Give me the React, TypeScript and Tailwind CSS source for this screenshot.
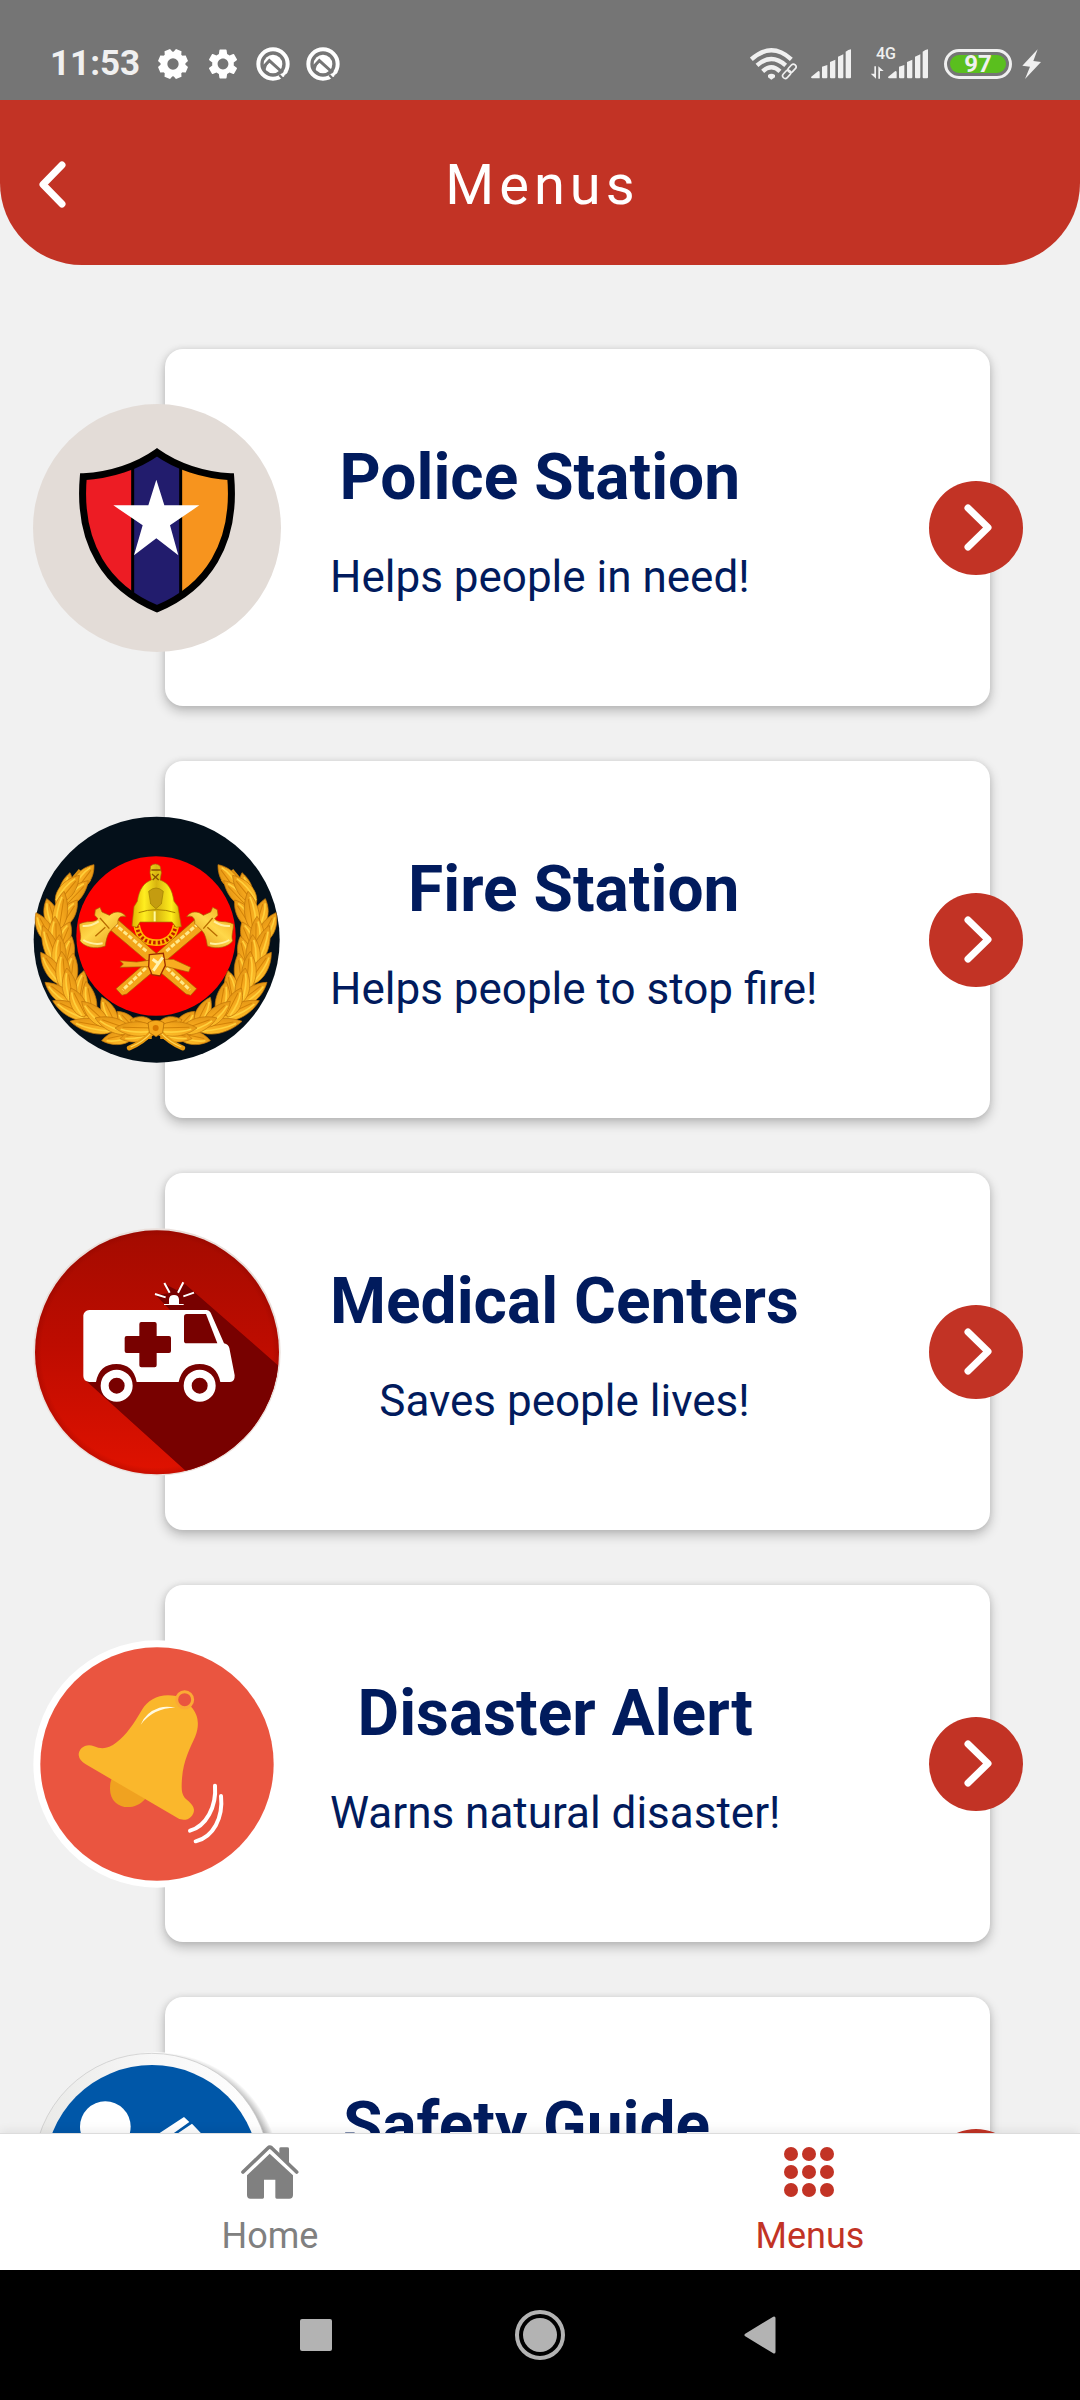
import type { ReactNode } from "react";
import { MdSettings } from "react-icons/md";

/* ---------- Status bar icons ---------- */

function CogIcon() {
  const teeth = [22.5, 67.5, 112.5, 157.5, 202.5, 247.5, 292.5, 337.5];
  return (
    <svg className="h-[30px] w-[30px]" viewBox="-45 -45 90 90" aria-hidden="true">
      <g fill="#fff">
        {teeth.map((a) => (
          <path key={a} d="M-14 -30 L-9 -45 H9 L14 -30Z" transform={`rotate(${a})`} />
        ))}
      </g>
      <circle r="27" fill="none" stroke="#fff" strokeWidth="20" />
    </svg>
  );
}

function CompassIcon() {
  return (
    <svg className="h-[34px] w-[34px]" viewBox="0 0 102 102" aria-hidden="true">
      <circle cx="51" cy="51" r="44" fill="none" stroke="#fff" strokeWidth="12" />
      <circle cx="51" cy="51" r="28" fill="#fff" />
      <path d="M20 62 L40 41 L88 84" fill="none" stroke="#757575" strokeWidth="9" />
      <path d="M20 58 L36 44 L28 70Z" fill="#757575" />
      <path d="M76 88 L92 72" fill="none" stroke="#fff" strokeWidth="9" />
      <path d="M70 84 L84 99" fill="none" stroke="#757575" strokeWidth="7" />
    </svg>
  );
}

function WifiIcon() {
  return (
    <svg className="h-[32px] w-[47px]" viewBox="26 38 141 96" aria-hidden="true">
      <g fill="none" stroke="#f0f0f0" strokeWidth="13">
        <path d="M30 72 Q90 18 150 72" />
        <path d="M47 90 Q90 52 133 90" />
        <path d="M64 108 Q90 84 116 108" />
      </g>
      <path d="M80 119 Q90 112 101 119 V126 L90 133 L80 126Z" fill="#f0f0f0" />
      <g fill="none" stroke="#757575" strokeWidth="11">
        <rect x="-17" y="-8" width="34" height="16" rx="8" transform="translate(135 117) rotate(-47)" />
        <rect x="-17" y="-8" width="34" height="16" rx="8" transform="translate(153 98) rotate(-47)" />
      </g>
      <g fill="none" stroke="#f0f0f0" strokeWidth="5">
        <rect x="-14" y="-8" width="28" height="16" rx="8" transform="translate(136 117) rotate(-47)" />
        <rect x="-14" y="-8" width="28" height="16" rx="8" transform="translate(152 99) rotate(-47)" />
      </g>
    </svg>
  );
}

const BARS =
  "M210 122 L232 104 Q236 104 236 108 V126 H214 Q210 126 210 122Z M243 91 L259 86 V123 Q259 126 256 126 H246 Q243 126 243 123Z M267 77 L283 70 V123 Q283 126 280 126 H270 Q267 126 267 123Z M291 61 L307 54 V123 Q307 126 304 126 H294 Q291 126 291 123Z M314 46 Q322 40 330 39 V123 Q330 126 327 126 H317 Q314 126 314 123Z";

function SignalIcon() {
  return (
    <svg className="h-[30px] w-[40px]" viewBox="210 38 120 90" aria-hidden="true">
      <path d={BARS} fill="#f0f0f0" />
    </svg>
  );
}

function MobileDataIcon() {
  return (
    <div className="relative h-[30px] w-[57px]">
      <span className="absolute -top-[4px] left-[5px] text-[16px] leading-[18px] font-medium">4G</span>
      <svg className="h-[30px] w-[57px]" viewBox="159 38 171 90" aria-hidden="true">
        <path d={BARS} fill="#f0f0f0" />
        <path d="M169 90 h5 V127 L158 112 H169Z M181 127 h5 V104 H197 L181 90Z" fill="#f0f0f0" />
      </svg>
    </div>
  );
}

/* ---------- Menu badges ---------- */

function PoliceBadge() {
  return (
    <svg viewBox="39 188 744 744" className="size-full" aria-hidden="true">
      <defs>
        <clipPath id="shield">
          <path d="M411 333 C470 375 550 402 632 406 C650 610 560 740 411 802 C262 740 172 610 190 406 C272 402 352 375 411 333Z" />
        </clipPath>
      </defs>
      <circle cx="411" cy="560" r="372" fill="#e3dcd7" />
      <g clipPath="url(#shield)">
        <rect x="170" y="320" width="168" height="500" fill="#ed1c24" />
        <rect x="338" y="320" width="144" height="500" fill="#221c6d" />
        <rect x="482" y="320" width="170" height="500" fill="#f7941e" />
        <path d="M338 320 V820 M482 320 V820" stroke="#000" strokeWidth="9" />
      </g>
      <path
        d="M411 333 C470 375 550 402 632 406 C650 610 560 740 411 802 C262 740 172 610 190 406 C272 402 352 375 411 333Z"
        fill="none"
        stroke="#000"
        strokeWidth="21"
      />
      <path
        d="M409 415 L433 492 H538 L450 552 L475 642 L409 591 L342 642 L368 552 L280 492 H385Z"
        fill="#fff"
      />
    </svg>
  );
}

/* Each leaf runs from its base on the stem to its tip. */
const LEAVES: [number, number, number, number][] = [
  [165, 262, 222, 190],
  [130, 310, 150, 214],
  [128, 315, 205, 238],
  [112, 300, 178, 222],
  [105, 380, 80, 292],
  [118, 375, 172, 296],
  [112, 385, 132, 270],
  [92, 420, 48, 334],
  [115, 440, 150, 362],
  [104, 450, 105, 345],
  [112, 490, 68, 372],
  [130, 500, 155, 405],
  [116, 505, 118, 400],
  [125, 545, 62, 453],
  [145, 560, 160, 455],
  [132, 560, 125, 450],
  [160, 610, 75, 543],
  [172, 600, 192, 508],
  [155, 600, 140, 500],
  [205, 650, 98, 598],
  [215, 645, 198, 540],
  [190, 640, 152, 560],
  [275, 685, 150, 660],
  [285, 675, 245, 588],
  [260, 672, 185, 600],
  [340, 700, 245, 718],
  [345, 690, 292, 630],
  [330, 690, 225, 650],
  [400, 690, 300, 712],
  [400, 678, 330, 655],
  [400, 685, 285, 680],
];

function Leaf({ leaf }: { leaf: [number, number, number, number] }) {
  const [bx, by, tx, ty] = leaf;
  const len = Math.hypot(tx - bx, ty - by);
  const angle = (Math.atan2(ty - by, tx - bx) * 180) / Math.PI;
  const w = 23;
  return (
    <g transform={`translate(${bx} ${by}) rotate(${angle})`}>
      <path
        d={`M-8 0 C${len * 0.15} ${-w * 1.3} ${len * 0.65} ${-w * 1.2} ${len} 0 C${len * 0.65} ${w * 1.2} ${len * 0.15} ${w * 1.3} -8 0Z`}
        fill="url(#gold)"
        stroke="#c07408"
        strokeWidth="2"
      />
      <path d={`M0 -5 Q${len * 0.5} -14 ${len * 0.85} -3`} fill="none" stroke="#ffd03c" strokeWidth="5" />
      <path d={`M0 5 L${len * 0.8} 3`} fill="none" stroke="#d28208" strokeWidth="3" />
    </g>
  );
}

function WreathHalf() {
  return (
    <g>
      <path
        d="M395 688 C260 690 110 610 112 420 C112 340 150 270 195 220"
        fill="none"
        stroke="#dc9010"
        strokeWidth="50"
      />
      {LEAVES.map((leaf) => (
        <Leaf key={leaf.join("-")} leaf={leaf} />
      ))}
      <path d="M398 690 Q370 722 328 740" fill="none" stroke="#e89a10" strokeWidth="15" strokeLinecap="round" />
      <path d="M392 696 Q368 722 332 737" fill="none" stroke="#ffd653" strokeWidth="4" />
    </g>
  );
}

function Axe() {
  return (
    <g>
      <path d="M268 362 L290 352 L530 562 L512 582 L498 578 L270 385Z" fill="#f3a51a" stroke="#a85c00" strokeWidth="2" />
      <path d="M282 366 L380 450 M440 500 L510 566" stroke="#ffe889" strokeWidth="9" strokeDasharray="14 5" />
      <path
        d="M226 325 L240 318 L246 332 L268 342 C284 328 306 328 318 346 C300 340 292 352 294 366 L272 388 C262 398 258 418 256 434 C226 446 190 436 180 418 C186 404 176 382 178 368 C200 356 222 366 234 352 L224 342Z"
        fill="url(#blade)"
        stroke="#a85c00"
        strokeWidth="2"
      />
      <path d="M188 374 Q212 376 236 360 M190 416 Q218 432 248 426" fill="none" stroke="#fff0a0" strokeWidth="6" />
      <path d="M240 350 L268 382 M226 405 L256 378" stroke="#b86c00" strokeWidth="4" />
    </g>
  );
}

function FireBadge() {
  return (
    <svg viewBox="39 44 744 744" className="size-full" aria-hidden="true">
      <defs>
        <linearGradient id="gold" x1="0" y1="0" x2="1" y2="1">
          <stop offset="0" stopColor="#ffc62e" />
          <stop offset="0.55" stopColor="#f4a61c" />
          <stop offset="1" stopColor="#d98c10" />
        </linearGradient>
        <linearGradient id="blade" x1="0" y1="0" x2="1" y2="1">
          <stop offset="0" stopColor="#f0a010" />
          <stop offset="0.45" stopColor="#ffd84a" />
          <stop offset="1" stopColor="#e08c0c" />
        </linearGradient>
        <linearGradient id="helmet" x1="0" y1="0" x2="1" y2="0">
          <stop offset="0" stopColor="#e0b400" />
          <stop offset="0.25" stopColor="#ffee20" />
          <stop offset="0.5" stopColor="#d8b410" />
          <stop offset="0.8" stopColor="#fff01c" />
          <stop offset="1" stopColor="#d0a400" />
        </linearGradient>
      </defs>
      <circle cx="410" cy="415" r="369" fill="#04101a" />
      <circle cx="408" cy="404" r="239" fill="#fe0000" />
      <WreathHalf />
      <g transform="translate(816 0) scale(-1 1)">
        <WreathHalf />
      </g>
      <path d="M384 664 Q408 650 432 664 L428 694 L408 706 L388 694Z" fill="#f5a81c" stroke="#a86000" strokeWidth="2" />
      <circle cx="407" cy="680" r="9" fill="#d87800" />
      <path d="M350 372 Q358 424 408 424 Q458 424 468 372" fill="none" stroke="#ffb400" strokeWidth="20" />
      <path
        d="M350 372 Q358 424 408 424 Q458 424 468 372"
        fill="none"
        stroke="#c01800"
        strokeWidth="11"
        strokeDasharray="7 6"
      />
      <Axe />
      <g transform="translate(818 0) scale(-1 1)">
        <Axe />
      </g>
      <path d="M300 478 L350 482 L408 474 L460 474 L512 498 L506 512 L440 496 L380 496 L300 498 L310 488Z" fill="#f8ac20" stroke="#a85c00" strokeWidth="2" />
      <path d="M388 460 L430 456 L436 492 L420 524 L396 520 L386 496Z" fill="#ffb82a" stroke="#9c2c00" strokeWidth="4" />
      <path d="M400 508 L428 468 M398 474 L412 484" stroke="#fff2b0" strokeWidth="9" />
      <path
        d="M392 194 Q406 182 420 194 L424 214 L420 236 C444 244 456 262 462 300 L474 316 L484 376 L468 378 L456 362 H360 L350 378 L336 374 L342 316 L352 300 C358 262 372 244 394 236 L390 214Z"
        fill="url(#helmet)"
        stroke="#a87400"
        strokeWidth="2"
      />
      <path d="M394 206 H422 M396 218 L416 236 M416 218 L398 236" stroke="#8a5200" strokeWidth="4" />
      <path d="M386 270 Q408 250 430 270 L424 308 L408 322 L392 308Z" fill="#c49c10" stroke="#9c7c00" strokeWidth="2" />
      <path d="M356 334 Q408 316 466 334" fill="none" stroke="#a88000" strokeWidth="3" />
      <path d="M404 330 V360" stroke="#fff9a0" strokeWidth="6" />
    </svg>
  );
}

function MedicalBadge() {
  return (
    <svg viewBox="39 54 744 744" className="size-full" aria-hidden="true">
      <defs>
        <linearGradient id="medical" x1="0" y1="0" x2="0" y2="1">
          <stop offset="0" stopColor="#a30b00" />
          <stop offset="0.5" stopColor="#bf0c00" />
          <stop offset="1" stopColor="#e01200" />
        </linearGradient>
        <radialGradient id="medicalRim" cx="0.5" cy="0.5" r="0.5">
          <stop offset="0.93" stopColor="#700" stopOpacity="0" />
          <stop offset="1" stopColor="#700" stopOpacity="0.3" />
        </radialGradient>
        <clipPath id="medicalClip">
          <circle cx="411" cy="427" r="366" />
        </clipPath>
      </defs>
      <circle cx="411" cy="426" r="371" fill="#eadfdb" />
      <g clipPath="url(#medicalClip)">
        <rect x="39" y="54" width="744" height="744" fill="url(#medical)" />
        <path d="M198 512 L500 785 L820 785 V506 L495 222 L470 240 L434 222 L445 250 L408 256 L450 300Z" fill="#780100" />
        <rect x="39" y="54" width="744" height="744" fill="url(#medicalRim)" />
      </g>
      <path
        d="M208 300 H560 Q568 300 572 308 L612 400 Q626 404 628 414 L644 496 Q645 516 630 516 H601 Q590 462 539 462 Q488 462 476 516 H350 Q340 462 289 462 Q238 462 228 516 H208 Q190 514 190 498 V316 Q192 302 208 300Z"
        fill="#fff"
      />
      <path d="M500 312 H558 L592 400 H500 Q492 400 492 392 V320 Q492 312 500 312Z" fill="#780100" />
      <path
        d="M364 336 H404 Q410 336 410 342 V378 H447 Q453 378 453 384 V423 Q453 429 447 429 H410 V466 Q410 472 404 472 H364 Q358 472 358 466 V429 H320 Q314 429 314 423 V384 Q314 378 320 378 H358 V342 Q358 336 364 336Z"
        fill="#780100"
      />
      <g fill="#780100" stroke="#fff" strokeWidth="24">
        <circle cx="290" cy="527" r="36" />
        <circle cx="539" cy="527" r="36" />
      </g>
      <path d="M432 282 H447 V268 Q448 255 462 255 Q476 255 477 268 V282 H491 V285 H432Z" fill="#fff" />
      <path d="M433 219 L449 248 M490 217 L474 248 M405 252 L437 262 M522 248 L490 259" stroke="#fff" strokeWidth="6" />
    </svg>
  );
}

function DisasterBadge() {
  return (
    <svg viewBox="39 59 744 744" className="size-full" aria-hidden="true">
      <circle cx="411" cy="431" r="371" fill="#fff" />
      <circle cx="411" cy="431" r="350" fill="#ea5540" />
      <path d="M276 474 L376 535 C340 578 270 565 270 505 Q270 485 276 474Z" fill="#f0a220" />
      <path
        d="M468 227 C420 218 386 236 366 268 C340 312 320 342 290 366 C265 386 245 388 222 378 C198 368 176 384 176 404 Q178 420 196 431 L474 594 C496 606 522 592 522 568 C520 552 504 542 494 532 C484 520 484 504 486 474 C490 420 512 380 526 348 C540 312 534 282 514 260Z"
        fill="#fab72c"
      />
      <circle cx="494" cy="238" r="24" fill="#ea5540" stroke="#fbaa35" strokeWidth="9" />
      <path d="M362 313 Q400 262 466 262 Q440 256 418 262 Q376 276 362 313Z" fill="#fff9df" />
      <g fill="none" stroke="#fff" strokeWidth="12" strokeLinecap="round">
        <path d="M585 496 C590 560 558 618 510 631" />
        <path d="M603 527 C610 592 580 650 527 663" />
      </g>
    </svg>
  );
}

function SafetyBadge() {
  return (
    <svg viewBox="9 38 744 744" className="size-full" aria-hidden="true">
      <defs>
        <linearGradient id="rim" x1="0" y1="0" x2="1" y2="0">
          <stop offset="0" stopColor="#e9e9e7" />
          <stop offset="0.5" stopColor="#f7f7f7" />
          <stop offset="1" stopColor="#fff" />
        </linearGradient>
        <radialGradient id="rimShade" cx="0.5" cy="0.5" r="0.5">
          <stop offset="0.93" stopColor="#b4b4b4" />
          <stop offset="1" stopColor="#fff" />
        </radialGradient>
      </defs>
      <circle cx="381" cy="410" r="371" fill="url(#rimShade)" />
      <circle cx="365" cy="396" r="354" fill="url(#rim)" stroke="#c4c4c4" strokeWidth="2" />
      <circle cx="366" cy="398" r="321" fill="#0057a8" />
      <circle cx="226" cy="262" r="76" fill="#fff" />
      <path d="M462 233 L478 248 L380 318 L360 300Z M486 253 L540 310 L450 360 L405 308Z" fill="#fff" />
    </svg>
  );
}

/* ---------- Menu list ---------- */

type MenuItem = { title: string; note: string; badge: ReactNode };

const ITEMS: MenuItem[] = [
  { title: "Police Station", note: "Helps people in need!", badge: <PoliceBadge /> },
  { title: "Fire Station", note: "Helps people to stop fire!", badge: <FireBadge /> },
  { title: "Medical Centers", note: "Saves people lives!", badge: <MedicalBadge /> },
  { title: "Disaster Alert", note: "Warns natural disaster!", badge: <DisasterBadge /> },
  { title: "Safety Guide", note: "Helps you stay safe!", badge: <SafetyBadge /> },
];

function MenuCard({ title, note, badge }: MenuItem) {
  return (
    <li className="flex items-center pr-[57px] pl-[33px]">
      <div className="z-10 size-[248px] shrink-0">{badge}</div>
      <article className="-ml-[116px] flex h-[357px] min-w-0 flex-1 items-center rounded-[18px] bg-white pb-3 pl-[165px] shadow-[0_5px_12px_rgba(0,0,0,0.24),0_0_6px_rgba(0,0,0,0.08)]">
        <div className="flex flex-col items-center gap-9 text-[#011b5d]">
          <h2 className="text-[64px] leading-[74px] font-bold">{title}</h2>
          <p className="text-[44px] leading-[52px]">{note}</p>
        </div>
      </article>
      <button
        type="button"
        aria-label={`Open ${title}`}
        className="-ml-[61px] flex size-[94px] shrink-0 items-center justify-center rounded-full bg-[#c23325] pl-1"
      >
        <svg className="h-[47px] w-[28px]" viewBox="0 0 28 47" fill="none" aria-hidden="true">
          <path d="M4 4 L24 23.5 L4 43" stroke="#fff" strokeWidth="7" strokeLinecap="round" strokeLinejoin="round" />
        </svg>
      </button>
    </li>
  );
}

function HomeIcon() {
  return (
    <svg className="h-[54px] w-[58px]" viewBox="635 315 174 162" aria-hidden="true">
      <path d="M750 345 V326 Q750 322 755 322 H774 Q779 322 779 326 V372Z" fill="#808080" />
      <path d="M641 396 L716 324 Q721 319 727 324 L802 396" fill="none" stroke="#808080" strokeWidth="11" strokeLinecap="round" />
      <path
        d="M721 341 L791 406 V465 Q791 476 780 476 H742 Q738 476 738 472 V419 H704 V472 Q704 476 700 476 H663 Q653 476 653 465 V406Z"
        fill="#808080"
      />
    </svg>
  );
}

function GridIcon() {
  const centers = [7, 25, 43];
  return (
    <svg className="h-[54px] w-[52px]" viewBox="0 -2 52 54" fill="#c23325" aria-hidden="true">
      {centers.map((y) => centers.map((x) => <circle key={`${x}-${y}`} cx={x} cy={y} r="7" />))}
    </svg>
  );
}

export default function App() {
  return (
    <div className="flex h-screen flex-col overflow-hidden bg-[#f1f1f1] font-[Roboto,sans-serif]">
      <div className="flex h-[100px] shrink-0 items-center justify-between bg-[#757575] pt-[27px] pr-[39px] pl-[50px] text-[#f0f0f0]">
        <div className="flex items-center">
          <span className="mr-[18px] text-[35px] leading-[40px] font-bold">11:53</span>
          <CogIcon />
          <MdSettings className="mr-[15px] ml-[17px] size-[36px] text-white" />
          <CompassIcon />
          <span className="ml-4">
            <CompassIcon />
          </span>
        </div>
        <div className="flex items-center">
          <WifiIcon />
          <span className="mr-5 ml-3.5">
            <SignalIcon />
          </span>
          <MobileDataIcon />
          <div className="ml-4 flex h-[30px] w-[68px] rounded-full border-3 border-[#f0f0f0] p-[3px]">
            <span className="flex flex-1 items-center justify-center rounded-full bg-[#5abf1e] text-[24px] leading-[18px] font-bold">
              97
            </span>
          </div>
          <svg className="ml-2.5 h-[30px] w-[19px]" viewBox="846 38 57 90" aria-hidden="true">
            <path d="M893 39 L847 88 L870 91 L855 128 L903 77 L880 74Z" fill="#f0f0f0" />
          </svg>
        </div>
      </div>

      <header className="grid h-[165px] shrink-0 grid-cols-[1fr_auto_1fr] items-center rounded-b-[82px] bg-[#c23325] pt-1 pr-[34px] pl-[39px] text-white">
        <button type="button" aria-label="Back" className="justify-self-start">
          <svg className="h-[47px] w-[27px]" viewBox="0 0 27 47" fill="none" aria-hidden="true">
            <path d="M23 4 L4 23.5 L23 43" stroke="#fff" strokeWidth="7" strokeLinecap="round" strokeLinejoin="round" />
          </svg>
        </button>
        <h1 className="text-[56px] leading-[64px] tracking-[5px]">Menus</h1>
      </header>

      <main className="min-h-0 flex-1 overflow-hidden pt-[84px]">
        <ul className="flex flex-col gap-[55px]">
          {ITEMS.map((item) => (
            <MenuCard key={item.title} {...item} />
          ))}
        </ul>
      </main>

      <nav className="z-20 grid shrink-0 grid-cols-2 border-t border-[#dcdcdc] bg-white pt-[11px] pb-[13px] text-[36px] leading-[42px] shadow-[0_-2px_10px_rgba(0,0,0,0.08)]">
        <a href="#home" className="flex flex-col items-center gap-4 text-[#808080]">
          <HomeIcon />
          Home
        </a>
        <a href="#menus" aria-current="page" className="flex flex-col items-center gap-4 text-[#c23325]">
          <GridIcon />
          Menus
        </a>
      </nav>

      <div className="z-20 flex h-[130px] shrink-0 items-center justify-center gap-[179px] bg-black">
        <button type="button" aria-label="Recent apps" className="flex w-10 justify-center">
          <span className="size-8 rounded-[2px] bg-[#b3b3b3]" />
        </button>
        <button type="button" aria-label="Home screen" className="size-[50px] rounded-full border-4 border-[#b3b3b3] p-1">
          <span className="block size-full rounded-full bg-[#b3b3b3]" />
        </button>
        <button type="button" aria-label="Go back" className="flex w-10 justify-start">
          <svg className="h-[38px] w-[32px]" viewBox="0 0 32 38" aria-hidden="true">
            <path d="M2 19 L30 2 V36Z" fill="#b3b3b3" stroke="#b3b3b3" strokeWidth="3" strokeLinejoin="round" />
          </svg>
        </button>
      </div>
    </div>
  );
}
